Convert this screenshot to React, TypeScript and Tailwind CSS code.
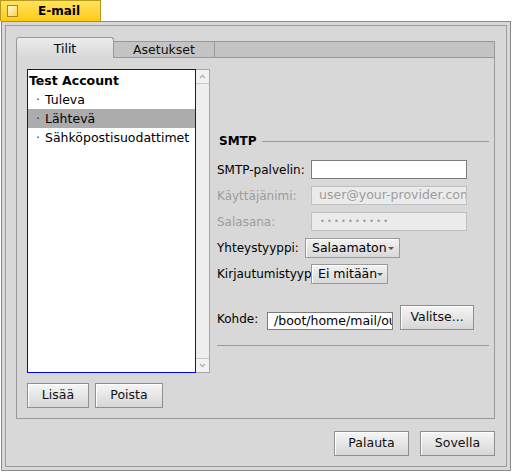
import React from 'react'

const Button = ({ children, className }: { children: React.ReactNode; className: string }) => (
  <button
    className={`flex items-center justify-center border border-[#8f8f8f] bg-gradient-to-b from-[#f6f6f6] to-[#d6d6d6] text-[12.5px] text-[#111] shadow-[inset_1px_1px_0_#fff] ${className}`}
  >
    {children}
  </button>
)

const Dropdown = ({ label, className }: { label: string; className: string }) => (
  <div
    className={`flex h-[20px] items-center border border-[#9a9a9a] bg-gradient-to-b from-[#f2f2f2] to-[#d8d8d8] pl-[6px] pr-[5px] text-[12.5px] shadow-[inset_1px_1px_0_#fff] ${className}`}
  >
    <span className="flex-1 whitespace-nowrap">{label}</span>
    <span className="h-0 w-0 border-l-[3px] border-r-[3px] border-t-[3px] border-l-transparent border-r-transparent border-t-[#555]" />
  </div>
)

const ListItem = ({ text, selected }: { text: string; selected?: boolean }) => (
  <div className={`flex h-[19px] items-center pl-[8px] pt-[1px] ${selected ? 'bg-[#acacac]' : ''}`}>
    <span className="w-[9px] text-[#333]">·</span>
    <span>{text}</span>
  </div>
)

export default function App() {
  return (
    <div className="h-[473px] w-[514px] overflow-hidden bg-white font-['DejaVu_Sans',sans-serif] text-[12.5px] text-black">
      {/* title tab */}
      <div className="flex h-[21px] w-[101px] items-center border-l border-r border-t border-[#b49a1e] bg-gradient-to-b from-[#ffe35a] to-[#ffcb00] pl-[6px]">
        <div className="h-[12px] w-[11px] border border-[#a08a30] bg-gradient-to-br from-[#fffbe0] to-[#ffcf20]" />
        <span className="ml-[20px] text-[12px] font-bold">E-mail</span>
      </div>

      {/* window */}
      <div className="ml-[1px] h-[450px] w-[510px] border border-[#8a8a8a] bg-[#d8d8d8] p-[3px]">
        <div className="h-full w-full border border-[#9c9c9c] pl-[10px] pt-[11px]">
          {/* tab view */}
          <div className="w-[479px]">
            <div className="flex h-[21px] items-end">
              <div className="flex h-[21px] w-[98px] items-center justify-center rounded-t-[3px] border-l border-r border-t border-[#999] bg-gradient-to-b from-[#ececec] to-[#d8d8d8] pt-[2px]">
                Tilit
              </div>
              <div className="flex h-[17px] w-[101px] items-center justify-center border-b border-r border-t border-[#999] bg-[#c4c4c4] pt-[1px] text-[#111]">
                Asetukset
              </div>
              <div className="h-[17px] flex-1 border-b border-r border-t border-[#999] bg-[#c4c4c4]" />
            </div>

            <div className="flex h-[361px] border-b border-l border-r border-[#999] pl-[10px] pt-[11px]">
              {/* accounts list */}
              <div className="flex w-[183px] flex-col">
                <div className="flex h-[304px]">
                  <div className="w-[169px] border border-[#0000ff] bg-white pt-[1px]">
                    <div className="flex h-[19px] items-center pl-[1px] pt-[1px] font-bold">Test Account</div>
                    <ListItem text="Tuleva" />
                    <ListItem text="Lähtevä" selected />
                    <ListItem text="Sähköpostisuodattimet" />
                  </div>
                  <div className="flex w-[14px] flex-col justify-between border-b border-r border-t border-[#a6a6a6] bg-[#eeeeee]">
                    <div className="flex h-[14px] items-center justify-center border-b border-[#c8c8c8] bg-[#f2f2f2]">
                      <svg width="7" height="5" viewBox="0 0 7 5">
                        <polyline points="1,4 3.5,1.5 6,4" fill="none" stroke="#b0b0b0" strokeWidth="1.3" />
                      </svg>
                    </div>
                    <div className="flex h-[14px] items-center justify-center border-t border-[#c8c8c8] bg-[#f2f2f2]">
                      <svg width="7" height="5" viewBox="0 0 7 5">
                        <polyline points="1,1 3.5,3.5 6,1" fill="none" stroke="#b0b0b0" strokeWidth="1.3" />
                      </svg>
                    </div>
                  </div>
                </div>
                <div className="mt-[10px] flex gap-[6px]">
                  <Button className="h-[25px] w-[62px]">Lisää</Button>
                  <Button className="h-[25px] w-[68px]">Poista</Button>
                </div>
              </div>

              {/* SMTP settings */}
              <div className="ml-[7px] mt-[63px] flex w-[272px] flex-col text-[12px]">
                <div className="flex h-[18px] items-center">
                  <span className="pl-[2px] font-bold">SMTP</span>
                  <div className="ml-[5px] h-px flex-1 bg-[#9a9a9a]" />
                </div>

                <div className="mt-[10px] flex h-[19px] items-center">
                  <span className="w-[94px] whitespace-nowrap">SMTP-palvelin:</span>
                  <div className="h-[19px] w-[156px] border border-[#7c7c7c] bg-white" />
                </div>
                <div className="mt-[7px] flex h-[19px] items-center">
                  <span className="w-[94px] whitespace-nowrap text-[#9c9c9c]">Käyttäjänimi:</span>
                  <div className="flex h-[19px] w-[156px] items-center overflow-hidden whitespace-nowrap border border-[#c0c0c0] bg-[#ebebeb] pl-[7px] text-[12.5px] text-[#9c9c9c]">
                    user@your-provider.com
                  </div>
                </div>
                <div className="mt-[7px] flex h-[19px] items-center">
                  <span className="w-[94px] whitespace-nowrap text-[#9c9c9c]">Salasana:</span>
                  <div className="flex h-[19px] w-[156px] items-center overflow-hidden whitespace-nowrap border border-[#c0c0c0] bg-[#ebebeb] pl-[8px] text-[8px] tracking-[2.3px] text-[#9c9c9c]">
                    ••••••••••
                  </div>
                </div>

                <div className="mt-[7px] flex h-[20px] items-center">
                  <span className="w-[88px] whitespace-nowrap">Yhteystyyppi:</span>
                  <Dropdown label="Salaamaton" className="w-[95px]" />
                </div>
                <div className="mt-[6px] flex h-[20px] items-center">
                  <span className="w-[94px] overflow-hidden whitespace-nowrap">Kirjautumistyyppi:</span>
                  <Dropdown label="Ei mitään" className="w-[77px]" />
                </div>

                <div className="mt-[21px] flex h-[25px] items-end">
                  <span className="mb-[2px] w-[50px] whitespace-nowrap">Kohde:</span>
                  <div className="flex h-[18px] w-[126px] items-center overflow-hidden whitespace-nowrap border border-[#7c7c7c] bg-white pl-[6px] text-[12.5px]">
                    /boot/home/mail/out
                  </div>
                  <Button className="ml-[7px] h-[25px] w-[74px]">Valitse...</Button>
                </div>

                <div className="mt-[15px] h-px w-[272px] bg-[#9a9a9a]" />
              </div>
            </div>
          </div>

          <div className="mt-[12px] flex w-[479px] justify-end gap-[11px]">
            <Button className="h-[25px] w-[75px]">Palauta</Button>
            <Button className="h-[25px] w-[75px]">Sovella</Button>
          </div>
        </div>
      </div>
    </div>
  )
}
